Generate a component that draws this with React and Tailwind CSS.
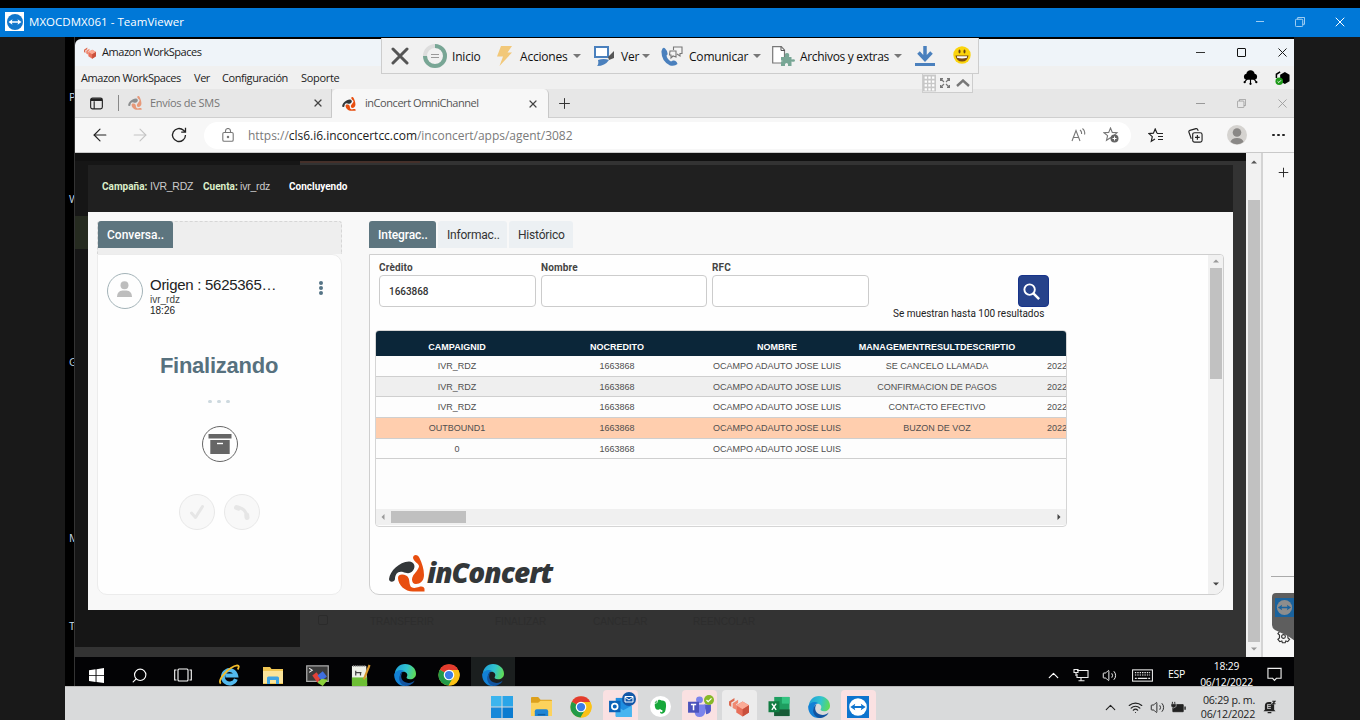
import React from "react";
import { X, Plus, ArrowLeft, ArrowRight, Search, ChevronUp, Volume2, Wifi } from "lucide-react";

const UI = "font-['Open_Sans','Noto_Sans',sans-serif]";
const ARIAL = "font-['Liberation_Sans',Arial,sans-serif]";
const ROBOTO = "font-['Roboto',Arial,sans-serif]";

function InConcertMark({ className }) {
  return (
    <svg viewBox="0 0 36 37" className={className}>
      <path fill="#333739" d="M0 24C1 16 10 7 20 6.5C25.5 6.5 27 12 24 15.5C21 19.5 17 18 14 17C9 15.5 6 19 6 24C5.5 27.5 0 27.5 0 24Z" />
      <path fill="#e84e0f" d="M24 3C24-1 29-1 30.5 3C33 8 35 14 35 20C35 26 31 29 27 29C23 29 22 24 24 21C25 19 30 14 30 11C29.5 8 25 7 24 3Z" />
      <path fill="#e84e0f" d="M9 23C9 19 14 19 17 20.5C21 22.5 20 27 21 30C22 34 27 33 30 32C33 31 35.500 32 35.500 34V36.500H24C16 36.500 9 30 9 23Z" />
    </svg>
  );
}

function WorkspacesMark({ className }) {
  return (
    <svg viewBox="0 0 24 22" className={className}>
      <path d="M1 5l6-4v3L3.500 6v5L1 9z" fill="#dd6a50" />
      <path d="M5 7l6-4v3.500L9 8v6L5 12z" fill="#f08a72" />
      <path d="M16 5l7 4v8l-7 4.500L9 17V9z" fill="#e8705a" />
      <path d="M16 5l7 4-7 4.500L9 9z" fill="#fbab96" />
      <path d="M16 13.500l7-4.500v8l-7 4.500z" fill="#c9503c" />
    </svg>
  );
}

function TeamViewerMark({ className, bg = "#0e74ce", fg = "#fff" }) {
  return (
    <svg viewBox="0 0 20 20" className={className}>
      <rect width="20" height="20" fill={bg} />
      <circle cx="10" cy="10" r="8" fill={fg} />
      <path d="M3 10l4.500-3-.6 2.200h6.200L12.500 7 17 10l-4.500 3 .6-2.200H6.900l.6 2.200z" fill={bg} />
    </svg>
  );
}

function EdgeMark({ className, id }) {
  return (
    <svg viewBox="0 0 24 24" className={className}>
      <defs>
        <linearGradient id={id} x1="0" y1="0.3" x2="1" y2="0.5">
          <stop offset="0" stopColor="#1f9fd8" />
          <stop offset="0.55" stopColor="#31c4cf" />
          <stop offset="1" stopColor="#5fdc55" />
        </linearGradient>
      </defs>
      <path d="M1 13C0 5 6 0 12 0c7 0 12 5 12 10.500 0 4-3 6-6.500 6-3 0-4.500-1-3.500-2.500 1.500-2.500 0-5.500-4-5.500C5 8.500 1.500 10 1 13z" fill={`url(#${id})`} />
      <path d="M.2 11.500C1.500 7 7 5.500 11 7.500c-3.500 1-5 4-4.500 8 .6 4 3.500 7 7 8.200C6 25 0 19 .2 11.500z" fill="#1281d6" />
      <path d="M9.500 9c-3 3.500-2 9 3 11 4 1.500 7.500.5 10-2-1.500 4-6 6-10 6-5-1-8-6-6.500-10.500C6.700 11 8 9.700 9.500 9z" fill="#1254a0" />
    </svg>
  );
}

function ChromeMark({ className }) {
  return (
    <svg viewBox="0 0 24 24" className={className}>
      <circle cx="12" cy="12" r="11.500" fill="#fbc116" />
      <path d="M12 12L2 6.200A11.500 11.500 0 0 1 22 6.200z" fill="#e33b2e" />
      <path d="M2 6.200A11.500 11.500 0 0 0 11.500 23.500L17 14.500 12 12z" fill="#229a48" />
      <path d="M12 6.500h10.200A11.500 11.500 0 0 1 11.500 23.500L17 14.500z" fill="#fbc116" />
      <circle cx="12" cy="12" r="5.800" fill="#fff" />
      <circle cx="12" cy="12" r="4.500" fill="#3c7de6" />
    </svg>
  );
}

function FolderMark({ className }) {
  return (
    <svg viewBox="0 0 24 22" className={className}>
      <path d="M1 2q0-1 1-1h6.500l2.500 3h11q1 0 1 1v16H1z" fill="#dda01c" />
      <path d="M1 7h7.500L11 5h12v16H1z" fill="#fcd25c" />
      <path d="M5 21v-5q0-2 2-2h10q2 0 2 2v5z" fill="#1f85d4" />
      <path d="M8 19.500h8" stroke="#0f60a5" strokeWidth="1.500" />
    </svg>
  );
}

function Caret() {
  return (
    <svg viewBox="0 0 8 4" className="h-[4px] w-[8px]">
      <path d="M0 0h8L4 4z" fill="#777" />
    </svg>
  );
}

function RestoreIcon({ className }) {
  return (
    <svg viewBox="0 0 11 11" className={className} fill="none" stroke="currentColor">
      <rect x=".5" y="2.500" width="8" height="8" rx="1" />
      <path d="M3 2.500V.5h7.500V8H8.500" />
    </svg>
  );
}

function TitleBar() {
  return (
    <header className={`flex h-[29px] shrink-0 items-center bg-[#0078d7] pb-[2px] text-white ${UI}`}>
      <div className="ml-[5px] flex h-[19px] w-[19px] items-center justify-center bg-white">
        <svg viewBox="0 0 18 18" className="h-[18px] w-[18px]">
          <circle cx="9" cy="9" r="8" fill="#1177cc" />
          <path d="M2.500 9l4-2.700-.6 2h6.200l-.6-2 4 2.700-4 2.700.6-2H5.900l.6 2z" fill="#fff" />
        </svg>
      </div>
      <span className="ml-[5px] flex-1 whitespace-nowrap text-[11.5px] tracking-[0.04px]">MXOCDMX061 - TeamViewer</span>
      <div className="flex w-[120px] items-center">
        <span className="flex w-[40px] justify-center"><span className="h-px w-[8px] bg-[#9cccf2]" /></span>
        <span className="flex w-[40px] justify-center"><RestoreIcon className="h-[10px] w-[10px] text-[#b5daf6]" /></span>
        <span className="flex w-[40px] justify-center"><X className="h-[16px] w-[16px]" strokeWidth={1.5} /></span>
      </div>
    </header>
  );
}

function WorkspacesBar() {
  return (
    <div className={`flex h-[27px] shrink-0 items-center rounded-tl-[6px] bg-[#eff4f9] text-[#1a1a1a] ${UI}`}>
      <WorkspacesMark className="ml-[8px] h-[12px] w-[14px]" />
      <span className="ml-[5px] flex-1 whitespace-nowrap text-[11px] tracking-[-0.45px]">Amazon WorkSpaces</span>
      <div className="-mr-[9px] flex">
        <span className="flex w-[41px] items-center justify-center"><span className="h-[1.5px] w-[9px] bg-[#333]" /></span>
        <span className="flex w-[41px] items-center justify-center"><span className="h-[9px] w-[9px] rounded-[1px] border-[1.5px] border-[#111]" /></span>
        <span className="flex w-[41px] items-center justify-center"><X className="h-[15px] w-[15px]" strokeWidth={1.6} /></span>
      </div>
    </div>
  );
}

function WorkspacesMenu() {
  return (
    <div className={`flex h-[23px] shrink-0 items-center bg-[#f0f0f0] pt-[2px] text-[11px] tracking-[-0.43px] text-[#222] ${UI}`}>
      <span className="ml-[6px] w-[113px] whitespace-nowrap">Amazon WorkSpaces</span>
      <span className="w-[28px]">Ver</span>
      <span className="w-[79px] whitespace-nowrap">Configuración</span>
      <span className="flex-1 tracking-[-0.3px]">Soporte</span>
      <svg viewBox="0 0 16 16" className="mb-[2px] h-[15px] w-[15px]">
        <rect x="1" y="4" width="14" height="6.500" rx="3.200" />
        <circle cx="8" cy="4.800" r="4.500" />
        <path d="M8 9v5M5 9l-3 3.500M11 9l3 3.500" stroke="#000" strokeWidth="1.200" />
        <circle cx="8" cy="14.700" r="1.200" /><circle cx="1.800" cy="13" r="1.200" /><circle cx="14.200" cy="13" r="1.200" />
      </svg>
      <svg viewBox="0 0 16 16" className="mb-[2px] ml-[17px] mr-[4px] h-[16px] w-[15px]">
        <path d="M1.500 8V4L5.500 1.500" stroke="#000" strokeWidth="1.600" fill="none" />
        <path d="M10.500 1.500l5 3v7l-5 3-5-3v-7z" />
        <circle cx="4.500" cy="11.500" r="4" fill="#1f9a1a" />
        <path d="M2.700 11.500l1.400 1.300 2.300-2.400" stroke="#fff" fill="none" />
      </svg>
    </div>
  );
}

function BrowserTabs() {
  return (
    <div className={`flex h-[29px] shrink-0 items-stretch border-b border-[#cfcfcf] bg-[#e7e7e7] text-[11px] ${UI}`}>
      <div className="flex w-[43px] items-center justify-center">
        <svg viewBox="0 0 14 13" className="h-[13px] w-[13px]" fill="none" stroke="#222" strokeWidth="1.200">
          <rect x=".7" y=".7" width="12.600" height="11.600" rx="2" />
          <path d="M1 2.500h12" strokeWidth="2.600" />
          <path d="M4.500 4v8.500" />
        </svg>
      </div>
      <div className="my-[6px] w-px bg-[#888]" />
      <div className="flex w-[213px] items-center border-r border-[#c8c8c8] pl-[9px]">
        <InConcertMark className="h-[14px] w-[14px] opacity-50" />
        <span className="ml-[8px] flex-1 tracking-[-0.3px] text-[#767676]">Envíos de SMS</span>
        <X className="mr-[7px] h-[12px] w-[12px] text-[#444]" strokeWidth={2.400} />
      </div>
      <div className="-mb-px flex w-[217px] items-center rounded-t-[5px] border-r border-[#c8c8c8] bg-[#f7f7f7] pl-[10px]">
        <InConcertMark className="h-[14px] w-[14px]" />
        <span className="ml-[9px] flex-1 whitespace-nowrap tracking-[-0.45px] text-[#555]">inConcert OmniChannel</span>
        <X className="mr-[9px] h-[12px] w-[12px] text-[#444]" strokeWidth={2.400} />
      </div>
      <div className="flex flex-1 items-center pl-[7px]">
        <Plus className="h-[17px] w-[17px] text-[#333]" strokeWidth={1.4} />
      </div>
      <div className="-mr-[9px] flex text-[#9a9a9a]">
        <span className="flex w-[41px] items-center justify-center"><span className="h-px w-[9px] bg-[#999]" /></span>
        <span className="flex w-[41px] items-center justify-center"><RestoreIcon className="h-[9px] w-[9px]" /></span>
        <span className="flex w-[41px] items-center justify-center"><X className="h-[15px] w-[15px]" strokeWidth={1.4} /></span>
      </div>
    </div>
  );
}

function AddressBar() {
  return (
    <div className={`flex h-[35px] shrink-0 items-center border-b border-[#c9c9c9] bg-[#f7f7f7] text-[#222] ${UI}`}>
      <ArrowLeft className="ml-[15px] h-[20px] w-[20px]" strokeWidth={1.4} />
      <ArrowRight className="ml-[20px] h-[20px] w-[20px] text-[#c4c4c4]" strokeWidth={1.3} />
      <svg viewBox="0 0 16 16" className="ml-[21px] h-[16px] w-[16px]" fill="none" stroke="currentColor" strokeWidth="1.300">
        <path d="M14.500 8A6.500 6.500 0 1 1 12.500 3.300L14.300 5M14.500.8V5.200H10.200" />
      </svg>
      <div className="ml-[17px] flex h-[27px] w-[927px] items-center rounded-full bg-white">
        <svg viewBox="0 0 12 14" className="ml-[18px] h-[14px] w-[12px]" fill="none" stroke="#777" strokeWidth="1.100">
          <rect x=".8" y="4.500" width="10.400" height="8.700" rx="1.300" />
          <path d="M3.500 4.500V3a2.500 2.500 0 0 1 5 0v1.500" />
          <circle cx="6" cy="9" r=".7" fill="#555" />
        </svg>
        <span className="ml-[14px] flex-1 whitespace-nowrap pt-[1px] text-[12px] tracking-[-0.02px] text-[#7a7a7a]">
          https://<span className="text-[#1b1b1b]">cls6.i6.inconcertcc.com</span>/inconcert/apps/agent/3082
        </span>
        <svg viewBox="0 0 15 14" className="h-[14px] w-[15px]" fill="none" stroke="#777" strokeWidth="1.100">
          <path d="M1 13L5 2.500 9 13M2.500 9.500h5M9 2q2 1.500 1.500 4M11.500.5q3 2.500 2 6" />
        </svg>
        <svg viewBox="0 0 16 16" className="ml-[17px] mr-[12px] h-[16px] w-[16px]">
          <path d="M7.500 1l1.800 4.400 4.700.4-3.600 3.100.8 4.200-3.700-2.400-4 2.500 1.100-4.600L1 5.800l4.700-.4z" fill="none" stroke="#777" strokeWidth="1.100" />
          <circle cx="11.500" cy="11.500" r="4" fill="#666" />
          <path d="M11.500 9.500v4M9.500 11.500h4" stroke="#fff" />
        </svg>
      </div>
      <svg viewBox="0 0 16 15" className="ml-[17px] h-[15px] w-[16px]" fill="none" stroke="currentColor" strokeWidth="1.200">
        <path d="M9 5.300L7.200 1 5.400 5.200 1 5.600l3.300 3-1 4.600L7 11M9 5.500h6M10 8.500h5M10 11.500h5" />
      </svg>
      <svg viewBox="0 0 16 16" className="ml-[24px] h-[15px] w-[15px]" fill="none" stroke="currentColor" strokeWidth="1.200">
        <rect x="5" y="5" width="10" height="10" rx="2" />
        <path d="M10 7.500v5M7.500 10h5M3.500 11.500L1 4.500q-.5-1.500 1-2L8.500.7q1.500-.3 2 1.300l.3 1" />
      </svg>
      <svg viewBox="0 0 20 20" className="ml-[24px] h-[20px] w-[20px]">
        <circle cx="10" cy="10" r="10" fill="#d5d3d0" />
        <circle cx="10" cy="7.500" r="4.300" fill="#8a8886" />
        <path d="M3.500 17q1-4 6.500-4t6.500 4Q10 21.500 3.500 17z" fill="#8a8886" />
      </svg>
      <div className="ml-[25px] flex gap-[2.500px]">
        <i className="h-[2.500px] w-[2.500px] rounded-full bg-[#222]" />
        <i className="h-[2.500px] w-[2.500px] rounded-full bg-[#222]" />
        <i className="h-[2.500px] w-[2.500px] rounded-full bg-[#222]" />
      </div>
    </div>
  );
}

function ConversationPanel() {
  return (
    <section className="flex h-[375px] w-[245px] flex-col">
      <div className="h-[33px] rounded-t-[3px] border border-b-0 border-dashed border-[#d6d6d6] bg-[#eee]">
        <div className={`-mt-px flex h-[27px] w-[75px] items-center rounded-t-[3px] bg-[#5d757f] pl-[9px] text-[12px] font-medium text-white ${ROBOTO}`}>Conversa..</div>
      </div>
      <div className="flex h-[341px] flex-col items-center rounded-[10px] rounded-tl-none border border-[#ececec] bg-[#fefefe]">
        <div className={`flex w-full ${ARIAL}`}>
          <div className="ml-[9px] mt-[18px] flex h-[36px] w-[36px] items-center justify-center rounded-full border-[1.5px] border-[#a3b3b8]">
            <svg viewBox="0 0 18 18" className="mb-[4px] mr-[2px] h-[17px] w-[17px]" fill="#bdbdbd">
              <circle cx="9" cy="4.500" r="4.200" />
              <path d="M1 17q0-6.500 6-7h4q6 .5 6 7z" />
            </svg>
          </div>
          <div className="ml-[7px] mt-[20px] flex w-[163px] flex-col text-[#222]">
            <span className="whitespace-nowrap text-[15px] leading-[20px] tracking-[-0.28px]">Origen : 5625365…</span>
            <span className="text-[10px] leading-[10px] text-[#444]">ivr_rdz</span>
            <span className="text-[10px] leading-[11px]">18:26</span>
          </div>
          <div className="ml-[6px] mt-[26px] flex flex-col gap-[1px]">
            <i className="h-[4px] w-[4px] rounded-full bg-[#557486]" />
            <i className="h-[4px] w-[4px] rounded-full bg-[#557486]" />
            <i className="h-[4px] w-[4px] rounded-full bg-[#557486]" />
          </div>
        </div>
        <h2 className={`-ml-[1px] mt-[35px] h-[30px] text-[22px] font-bold leading-[30px] tracking-[-0.25px] text-[#57717e] ${ARIAL}`}>Finalizando</h2>
        <div className="-ml-[2px] mt-[19px] flex gap-[5px]">
          <i className="h-[3px] w-[4px] rounded-full bg-[#cdd9df]" />
          <i className="h-[3px] w-[4px] rounded-full bg-[#cdd9df]" />
          <i className="h-[3px] w-[4px] rounded-full bg-[#cdd9df]" />
        </div>
        <div className="mt-[23px] flex h-[36px] w-[36px] items-center justify-center rounded-full border border-[#666]">
          <svg viewBox="0 0 24 20" className="h-[20px] w-[24px] shrink-0" fill="#666">
            <path d="M.5 0h23v4.500H.5zM2.300 6h19.400v14H2.300z" />
            <path d="M9 9.500h6" stroke="#fff" strokeWidth="1.400" />
          </svg>
        </div>
        <div className="-ml-[1px] mt-[32px] flex gap-[9px]">
          <div className="flex h-[36px] w-[36px] items-center justify-center rounded-full border border-[#e8e8e8] bg-[#f8f8f8]">
            <svg viewBox="0 0 16 16" className="h-[16px] w-[16px]" fill="none" stroke="#e6e6e6" strokeWidth="3" strokeLinecap="round" strokeLinejoin="round"><path d="M2.500 9l4 4.500L13.500 2.500" /></svg>
          </div>
          <div className="flex h-[36px] w-[36px] items-center justify-center rounded-full border border-[#e8e8e8] bg-[#f8f8f8]">
            <svg viewBox="0 0 16 16" className="h-[16px] w-[16px]" fill="none" stroke="#e6e6e6" strokeLinecap="round"><path d="M3 3.500Q11.500 3.500 13 13" strokeWidth="3" /><path d="M2.500 3.500l2 .7M12.700 11l.3 2.500" strokeWidth="5" /></svg>
          </div>
        </div>
      </div>
    </section>
  );
}

const ROWS = [
  ["IVR_RDZ", "1663868", "OCAMPO ADAUTO JOSE LUIS", "SE CANCELO LLAMADA", "2022"],
  ["IVR_RDZ", "1663868", "OCAMPO ADAUTO JOSE LUIS", "CONFIRMACION DE PAGOS", "2022"],
  ["IVR_RDZ", "1663868", "OCAMPO ADAUTO JOSE LUIS", "CONTACTO EFECTIVO", "2022"],
  ["OUTBOUND1", "1663868", "OCAMPO ADAUTO JOSE LUIS", "BUZON DE VOZ", "2022"],
  ["0", "1663868", "OCAMPO ADAUTO JOSE LUIS", "", ""],
];
const ROW_BG = ["bg-[#fdfdfd]", "bg-[#efefef]", "bg-[#fdfdfd]", "bg-[#ffceae]", "bg-[#fdfdfd]"];
const COLS = "grid grid-cols-[160px_160px_160px_160px_1fr]";

function ResultsTable() {
  return (
    <div className={`flex h-[197px] w-[692px] flex-col overflow-hidden rounded-[4px] border border-[#d5d5d5] bg-[#fdfdfd] ${ARIAL}`}>
      <div className={`-mx-px -mt-px h-[26px] shrink-0 bg-[#0b2639] pl-[2px] pt-[10px] text-center text-[9px] font-bold leading-[14px] text-white ${COLS}`}>
        <span>CAMPAIGNID</span>
        <span>NOCREDITO</span>
        <span>NOMBRE</span>
        <span className="tracking-[0.02px]">MANAGEMENTRESULTDESCRIPTIO</span>
      </div>
      {ROWS.map((r, i) => (
        <div key={i} className={`h-[20.7px] shrink-0 border-b border-[#cfcfcf] pl-[1px] text-center text-[9px] leading-[20px] text-[#4f4f4f] ${COLS} ${ROW_BG[i]}`}>
          <span>{r[0]}</span><span>{r[1]}</span><span>{r[2]}</span><span>{r[3]}</span>
          <span className="pl-[30px] text-left">{r[4]}</span>
        </div>
      ))}
      <div className="flex-1" />
      <div className="mb-[1px] flex h-[16px] items-center bg-[#f0f0f0]">
        <svg viewBox="0 0 4 8" className="ml-[5px] h-[6px] w-[4px]"><path d="M4 0v8L0 4z" fill="#999" /></svg>
        <div className="ml-[6px] h-[12px] w-[75px] bg-[#c0c0c0]" />
        <div className="flex-1" />
        <svg viewBox="0 0 4 8" className="mr-[5px] h-[6px] w-[4px]"><path d="M0 0v8l4-4z" fill="#444" /></svg>
      </div>
    </div>
  );
}

function Field({ label, width, value }) {
  return (
    <label className={`mr-[5px] flex flex-col text-[10px] text-[#333] ${ROBOTO} ${width}`}>
      <span className="h-[15px] font-bold leading-[15px] tracking-[0.15px] text-[#444]">{label}</span>
      <span className="flex h-[32px] items-center rounded-[4px] border border-[#ccc] bg-white pl-[9px] font-medium tracking-[-0.05px]">{value}</span>
    </label>
  );
}

function IntegrationPanel() {
  const tab = `flex h-[27px] items-center rounded-t-[3px] pl-[9px] text-[12px]`;
  return (
    <section className="ml-[27px] flex h-[375px] w-[855px] flex-col">
      <div className={`flex h-[33px] gap-[2px] ${ROBOTO}`}>
        <div className={`${tab} w-[67px] bg-[#5d757f] font-medium tracking-[-0.1px] text-white`}>Integrac..</div>
        <div className={`${tab} w-[69px] bg-[#ecf0f3] tracking-[-0.2px] text-[#333]`}>Informac..</div>
        <div className={`${tab} w-[64px] bg-[#ecf0f3] tracking-[-0.2px] text-[#333]`}>Histórico</div>
      </div>
      <div className="flex h-[341px] overflow-hidden rounded-b-[10px] rounded-tr-[4px] border border-[#cfcfcf] bg-[#fefefe]">
        <div className="flex flex-1 flex-col">
          <div className="flex h-[52px] pl-[9px] pt-[5px]">
            <Field label="Crèdito" width="w-[157px]" value="1663868" />
            <Field label="Nombre" width="w-[166px]" value="" />
            <Field label="RFC" width="w-[157px]" value="" />
            <div className="ml-[144px] mt-[15px] flex h-[32px] w-[31px] items-center justify-center rounded-[4px] border border-[#17338a] bg-[#26428b]">
              <svg viewBox="0 0 20 20" className="mr-[5px] h-[19px] w-[19px]" fill="none" stroke="#fff" strokeWidth="2"><circle cx="8" cy="8" r="5.500" /><path d="M12 12l6 6" strokeWidth="2.600" /></svg>
            </div>
          </div>
          <div className={`h-[23px] pl-[523px] text-[10px] leading-[14px] tracking-[-0.02px] text-[#222] ${ROBOTO}`}>Se muestran hasta 100 resultados</div>
          <div className="pl-[5px]"><ResultsTable /></div>
          <div className="flex pl-[19px] pt-[28px]">
            <InConcertMark className="h-[37px] w-[36px]" />
            <span className="ml-[2px] h-[37px] whitespace-nowrap font-['Open_Sans',sans-serif] text-[28px] font-extrabold italic leading-[34px] tracking-[-0.95px] text-[#333739]">inConcert</span>
          </div>
        </div>
        <div className="flex w-[15px] flex-col items-center bg-[#f1f1f1]">
          <svg viewBox="0 0 8 4" className="mt-[4px] h-[4px] w-[6px]"><path d="M0 4h8L4 0z" fill="#999" /></svg>
          <div className="mt-[5px] h-[111px] w-[12px] bg-[#c1c1c1]" />
          <div className="flex-1" />
          <svg viewBox="0 0 8 4" className="mb-[8px] h-[4px] w-[6px]"><path d="M0 0h8L4 4z" fill="#444" /></svg>
        </div>
      </div>
    </section>
  );
}

function Modal() {
  return (
    <div className="flex w-[1145px] flex-col bg-[#f8f8f8]">
      <div className={`flex h-[47px] shrink-0 items-center bg-[#202020] pl-[14px] pb-[5px] text-[10px] ${ROBOTO}`}>
        <span className="w-[48px] font-bold text-[#dcefc9]">Campaña:</span>
        <span className="w-[53px] pt-[1px] text-[10.5px] tracking-[-0.25px] text-[#ccc] font-['Liberation_Sans',sans-serif]">IVR_RDZ</span>
        <span className="w-[36px] font-bold text-[#dcefc9]">Cuenta:</span>
        <span className="w-[50px] pl-[1px] pt-[1px] text-[10.5px] tracking-[-0.2px] text-[#ccc] font-['Liberation_Sans',sans-serif]">ivr_rdz</span>
        <span className="font-bold text-white">Concluyendo</span>
      </div>
      <div className="flex flex-1 pl-[9px] pt-[9px]">
        <ConversationPanel />
        <IntegrationPanel />
      </div>
    </div>
  );
}

function PageArea() {
  return (
    <div className="flex w-[1171px] flex-col bg-[#333]">
      <div className="flex h-[12px] shrink-0 flex-col">
        <div className="h-[8px] bg-[#111]" />
        <div className="flex h-[4px]">
          <div className="w-[225px] bg-[#161616]" />
          <div className="h-[2px] w-[120px] bg-[#45302a]" />
        </div>
      </div>
      <div className="flex h-[445px] shrink-0">
        <div className="w-[13px] bg-[#161616] pt-[51px]"><div className="h-[33px] bg-[#262b20]" /></div>
        <Modal />
      </div>
      <div className="flex flex-1">
        <div className="h-[37px] w-[225px] bg-[#161616]" />
        <div className={`flex pt-[4px] text-[10px] text-[#2d2d2d] ${ARIAL}`}>
          <span className="ml-[18px] mt-[1px] h-[10px] w-[10px] rounded-[2px] border border-[#2b2b2b]" />
          <span className="ml-[42px] w-[125px]">TRANSFERIR</span>
          <span className="w-[98px]">FINALIZAR</span>
          <span className="w-[100px]">CANCELAR</span>
          <span>REENCOLAR</span>
        </div>
      </div>
    </div>
  );
}

function BrowserContent() {
  return (
    <div className="flex h-[504px] shrink-0">
      <PageArea />
      <div className="flex w-[17px] flex-col items-center border-r-2 border-[#d4d4d4] bg-[#f1f1f1]">
        <svg viewBox="0 0 8 4" className="mt-[7px] h-[4px] w-[6px]"><path d="M0 4h8L4 0z" fill="#555" /></svg>
        <div className="mt-[36px] h-[442px] w-[12px] bg-[#c1c1c1]" />
        <svg viewBox="0 0 8 4" className="mt-[5px] h-[4px] w-[6px]"><path d="M0 0h8L4 4z" fill="#999" /></svg>
      </div>
      <div className="flex w-[31px] flex-col items-center overflow-hidden bg-[#f7f7f7]">
        <Plus className="ml-[9px] mt-[12px] h-[15px] w-[15px] shrink-0 text-[#222]" strokeWidth={1.500} />
        <div className="ml-auto mt-[396px] h-px w-[23px] shrink-0 bg-[#aaa]" />
        <div className="relative ml-auto mt-[16px] h-[60px] w-[22px] shrink-0">
          <svg viewBox="0 0 16 16" className="absolute left-[4px] top-[36px] h-[15px] w-[15px]" fill="none" stroke="#333" strokeWidth="1.200">
            <path d="M6.500 1h3l.5 2 2-.8 2 2.500L12.700 6.500v3L14.500 11l-2 2.500-2-.8-.7 2h-3l-.6-2-2.200.8-2-2.500 1.700-1.500v-3L2 5l2-2.500 2 .7z" /><circle cx="8" cy="8" r="2" />
          </svg>
          <svg viewBox="0 0 23 48" className="absolute left-0 top-0 h-[48px] w-[23px]">
            <path d="M4 0H23V48L16 43 3 37Q0 35 0 32V4Q0 0 4 0z" fill="#5e5e5e" />
          </svg>
          <TeamViewerMark className="absolute left-[3px] top-[5px] h-[19px] w-[19px]" bg="#1a639e" fg="#8d8d8d" />
        </div>
      </div>
    </div>
  );
}

function RemoteTaskbar() {
  const slot = "flex h-[36px] w-[44px] items-center justify-center";
  const narrow = "flex h-[36px] w-[43px] items-center justify-center";
  return (
    <div className={`flex h-[29px] shrink-0 items-start overflow-hidden bg-[#030305] text-white ${UI}`}>
      <div className={narrow}>
        <svg viewBox="0 0 16 16" className="h-[15px] w-[15px]" fill="#fff"><path d="M0 2.300l7-1v6.300H0zM8 1.200L16 0v7.600H8zM0 8.500h7v6.300l-7-1zM8 8.500h8V16l-8-1.100z" /></svg>
      </div>
      <div className={narrow}><Search className="h-[17px] w-[17px] -scale-x-100" strokeWidth={1.600} /></div>
      <div className={narrow}>
        <svg viewBox="0 0 18 14" className="h-[14px] w-[18px]" fill="none" stroke="#fff" strokeWidth="1.100"><rect x="4" y="1" width="10" height="12" rx="1" /><path d="M2.500 2H.7v10h1.800M15.500 2h1.800v10h-1.800" /></svg>
      </div>
      <div className={`${slot} ml-[3px]`}>
        <svg viewBox="0 0 24 24" className="h-[22px] w-[22px]" fill="none">
          <path d="M19.500 16.500A7.300 7.300 0 1 1 19.800 12.500H8" stroke="#52b9ee" strokeWidth="4.300" />
          <path d="M3 21.500C-1 17 12 3 21 1.500q3 0 .5 4.500" stroke="#f3bd2b" strokeWidth="2" />
        </svg>
      </div>
      <div className={slot}>
        <svg viewBox="0 0 20 18" className="h-[18px] w-[20px]"><path d="M0 1h7l1.500 2H20v15H0z" fill="#f0c653" /><path d="M0 5h20v12H0z" fill="#fbe49a" /><path d="M4 18v-6q0-1.500 1.500-1.500h9Q16 10.500 16 12v6h-3v-4H7v4z" fill="#3fa4e4" /></svg>
      </div>
      <div className={slot}>
        <svg viewBox="0 0 22 20" className="h-[21px] w-[23px]"><path d="M.7.7h20.600v15H.7z" fill="#3b3b3b" stroke="#aaa" strokeWidth="1.200" /><path d="M3 3l3 2-3 2" stroke="#eee" fill="none" /><path d="M6 10l4-3 4 5-3 5z" fill="#e24238" /><path d="M11 10l5-4 4 5-5 4z" fill="#3f6fe0" /><path d="M11 17l4-4 6 1-5 6z" fill="#8cd13b" /></svg>
      </div>
      <div className={slot}>
        <svg viewBox="0 0 22 24" className="mr-[2px] h-[23px] w-[21px]"><path d="M2 2h15l1 20H2z" fill="#eef0e8" /><path d="M2 14h16v9H2z" fill="#6dbf35" /><path d="M3 2h14" stroke="#888" strokeWidth="2" strokeDasharray="1 1" /><path d="M6 7v5M6 9h6M11 9v3" stroke="#444" strokeWidth="1.300" /><path d="M20.500 1l-6 15" stroke="#d9982c" strokeWidth="2.200" /></svg>
      </div>
      <div className={slot}><EdgeMark id="edge-a" className="h-[22px] w-[22px]" /></div>
      <div className={slot}><ChromeMark className="h-[22px] w-[22px]" /></div>
      <div className={`${slot} bg-[#1b1f1f]`}><EdgeMark id="edge-b" className="h-[22px] w-[22px]" /></div>
      <div className="flex-1" />
      <div className="flex h-[36px] items-center">
        <ChevronUp className="h-[17px] w-[17px]" strokeWidth={1.700} />
        <svg viewBox="0 0 16 14" className="ml-[11px] h-[14px] w-[16px]" fill="none" stroke="#eee" strokeWidth="1.100"><path d="M4 2.500h11v7H4V6M8 10v2.500M5.500 12.700h6" /><path d="M1 1.500h4v3H1zM3 5v3" /></svg>
        <Volume2 className="ml-[13px] h-[15px] w-[15px]" strokeWidth={1.500} />
        <svg viewBox="0 0 22 13" className="ml-[15px] h-[13px] w-[21px]" fill="none" stroke="#eee" strokeWidth="1.100"><rect x=".6" y=".6" width="20.800" height="11.800" /><path d="M3 3.500h16M3 6h16" strokeDasharray="1.500 1" /><path d="M3 9.500h2M6 9.500h10M17 9.500h2" /></svg>
        <span className="ml-[15px] w-[18px] text-[10.500px] tracking-[-0.3px]">ESP</span>
      </div>
      <div className="ml-[12px] w-[57px] whitespace-nowrap pt-[1px] text-center text-[10.300px] leading-[16px] tracking-[-0.2px]">
        <div>18:29</div>
        <div>06/12/2022</div>
      </div>
      <svg viewBox="0 0 16 15" className="ml-[12px] mr-[12px] mt-[10px] h-[15px] w-[15px]" fill="none" stroke="#eee" strokeWidth="1.200"><path d="M1 1h14v10.500h-5L8 13.700l-2-2.200H1z" /></svg>
    </div>
  );
}

function LocalTaskbar() {
  const slot = "flex w-[39.6px] justify-center";
  const box = "flex h-[34px] w-[35px] items-center justify-center rounded-[4px] pb-[1px]";
  return (
    <footer className={`flex h-[34px] shrink-0 items-start overflow-hidden border-t border-[#bbb] bg-[#d9dadb] pl-[417px] pt-[3px] text-[#222] ${UI}`}>
      <div className={slot}><div className={box}>
        <svg viewBox="0 0 22 22" className="h-[22px] w-[22px]"><path d="M0 0h10.500v10.500H0z" fill="#3cb5ee" /><path d="M11.500 0H22v10.500H11.500z" fill="#2ba5e8" /><path d="M0 11.500h10.500V22H0z" fill="#1788d9" /><path d="M11.500 11.500H22V22H11.500z" fill="#0b7bd0" /></svg>
      </div></div>
      <div className={slot}><div className={box}><FolderMark className="h-[21px] w-[23px]" /></div></div>
      <div className={slot}><div className={box}><ChromeMark className="h-[22px] w-[22px]" /></div></div>
      <div className={slot}><div className={`${box} relative bg-[#fae1e2]`}>
        <svg viewBox="0 0 24 22" className="h-[21px] w-[23px]"><path d="M7 2h16v19H7z" fill="#1f8ee0" /><path d="M7 10l8 5 9-5v12H7z" fill="#48b5f0" /><path d="M0 5h12v12H0z" fill="#0b63b8" /><circle cx="6" cy="11" r="3" fill="none" stroke="#fff" strokeWidth="1.800" /></svg>
        <svg viewBox="0 0 14 14" className="absolute right-[2px] top-[2px] h-[14px] w-[14px]"><circle cx="7" cy="7" r="7" fill="#1458a8" /><path d="M3 4.500h8v5.500H3zM3 5l4 3 4-3" fill="none" stroke="#fff" /></svg>
      </div></div>
      <div className={slot}><div className={box}>
        <svg viewBox="0 0 22 22" className="h-[21px] w-[21px]"><circle cx="11" cy="11" r="11" fill="#fff" /><path d="M9 4q-1 0-1.200 2.800Q7.500 8 5 8q-.5 6 3.500 6.500 1.500 0 2-1.200.5 1.500 2.500 1.500.5 2.200-1 2.200-1.200-.2-1.200-1-1 2.500 1.800 2.500 3 0 3.700-4Q17.500 9 16 6 14 4.500 12 4.800 11 3.700 9 4zM7 4.500L4.800 7H7z" fill="#17a83a" /></svg>
      </div></div>
      <div className={slot}><div className={`${box} relative bg-[#fae1e2]`}>
        <svg viewBox="0 0 24 22" className="h-[21px] w-[23px]"><circle cx="12" cy="4" r="3.600" fill="#7b83eb" /><circle cx="20" cy="6" r="2.500" fill="#5059c9" /><path d="M17 9h7v6q-1 4-5 4z" fill="#5059c9" /><path d="M7 9h11v8q-1 5-6 5t-5-5z" fill="#7b83eb" /><path d="M0 6h11.500v11.500H0z" fill="#4b53bc" /><path d="M3 9h5.500M5.750 9v6" stroke="#fff" strokeWidth="1.600" /></svg>
        <svg viewBox="0 0 12 12" className="absolute right-[3px] top-[5px] h-[10px] w-[10px]"><circle cx="6" cy="6" r="6" fill="#88b927" /><path d="M3 6l2 2 4-4" fill="none" stroke="#fff" strokeWidth="1.500" /></svg>
      </div></div>
      <div className={slot}><div className={`${box} bg-[#ececec]`}><WorkspacesMark className="h-[20px] w-[22px]" /></div></div>
      <div className={slot}><div className={box}>
        <svg viewBox="0 0 22 22" className="h-[21px] w-[22px]"><path d="M6 1h16v20H6z" fill="#1e9e60" /><path d="M14 1h8v7h-8z" fill="#33c481" /><path d="M6 14h16v7H6z" fill="#185c37" /><path d="M0 5.500h11.500V17H0z" fill="#107c41" /><path d="M3.500 8l4.500 6.500M8 8l-4.500 6.500" stroke="#fff" strokeWidth="1.500" /></svg>
      </div></div>
      <div className={slot}><div className={box}><EdgeMark id="edge-c" className="h-[22px] w-[22px]" /></div></div>
      <div className={slot}><div className={`${box} bg-[#fae1e2]`}><TeamViewerMark className="h-[22px] w-[22px]" /></div></div>
      <div className="flex-1" />
      <div className="flex h-[34px] items-center">
        <ChevronUp className="h-[17px] w-[17px]" strokeWidth={1.600} />
        <Wifi className="ml-[9px] h-[15px] w-[15px]" strokeWidth={1.800} />
        <Volume2 className="ml-[7px] h-[15px] w-[15px]" strokeWidth={1.500} />
        <svg viewBox="0 0 16 12" className="ml-[6px] h-[12px] w-[15px]"><path d="M2 3.500h11v7.500H2z" fill="#222" stroke="#222" /><path d="M15 5.500v3.500" stroke="#222" strokeWidth="1.500" /><path d="M0 2.500h5.500v3q-2.700 3-5.500 0z" fill="#222" stroke="#d9dadb" strokeWidth=".6" /><path d="M1.500.5v2M4 .5v2" stroke="#222" /></svg>
      </div>
      <div className="ml-[14px] w-[55px] whitespace-nowrap pt-[3px] text-right text-[10.700px] leading-[14px] tracking-[-0.25px]">
        <div>06:29 p. m.</div>
        <div>06/12/2022</div>
      </div>
      <svg viewBox="0 0 14 14" className="ml-[8px] mr-[18px] mt-[10px] h-[14px] w-[13px]"><path d="M2 10V6q0-4.500 4.500-4.500H9V4h3v6l1.500 1.500H.5z" fill="#222" /><path d="M5 13h4M10 .8h3L10.500 3.500h3" stroke="#222" strokeWidth="1.200" fill="none" /><path d="M5 4.500h3.500M5 6.500h3.500M5 8.500h3.500M5 4v5" stroke="#ddd" strokeWidth=".9" fill="none" /></svg>
    </footer>
  );
}

function RemoteToolbar() {
  return (
    <div className={`absolute left-[381px] top-[38px] flex h-[36px] w-[598px] items-center border border-t-0 border-[#cdcdcd] bg-[#f1f1f1] pt-[1px] text-[12px] tracking-[-0.2px] text-[#111] ${UI}`}>
      <svg viewBox="0 0 18 18" className="ml-[9px] h-[18px] w-[18px]" stroke="#555" strokeWidth="3" strokeLinecap="round"><path d="M2 2l14 14M16 2L2 16" /></svg>
      <svg viewBox="0 0 24 24" className="ml-[14px] h-[24px] w-[24px]" fill="none">
        <circle cx="12" cy="12" r="10" stroke="#ddd" strokeWidth="4" />
        <path d="M12 2a10 10 0 1 1-10 10" stroke="#78a695" strokeWidth="4" />
        <path d="M8 10.500h8M8 13.500h8" stroke="#999" />
      </svg>
      <span className="ml-[5px] w-[44px] pt-[1px]">Inicio</span>
      <svg viewBox="0 0 16 20" className="h-[20px] w-[16px]"><path d="M5 0h11l-4.500 6.500H16L3.500 20 7 10.500H1z" fill="#f2c879" /></svg>
      <span className="ml-[8px] w-[53px] pt-[1px]">Acciones</span><Caret />
      <svg viewBox="0 0 20 20" className="ml-[13px] h-[20px] w-[20px]"><path d="M1 1h13v10H1z" fill="#fff" stroke="#4a80bd" strokeWidth="2" /><path d="M4 14q6-2 11 0-4 6-12 6 2-2 1-6z" fill="#4a80bd" /><path d="M20 5v7l-5 2-1-3z" fill="#555" /></svg>
      <span className="ml-[7px] w-[21px] pt-[1px]">Ver</span><Caret />
      <svg viewBox="0 0 22 20" className="ml-[11px] h-[20px] w-[22px]"><path d="M4.500 3Q2-.500.5 5 0 15 9 19.500q5 1 7.500-1.500-1-4-4.500-3.500l-2 1Q6 13 5.500 9.500l1-1q.5-3-2-5.500z" fill="#4a80bd" /><path d="M9 5h6v6l-3-1-2 2V9H8.500zM12.500 4V1H21v6.500h-2V10l-3-2" fill="#f4f4f4" stroke="#777" strokeWidth="1.100" /></svg>
      <span className="ml-[6px] w-[64px] pt-[1px]">Comunicar</span><Caret />
      <svg viewBox="0 0 23 20" className="ml-[11px] h-[20px] w-[23px]"><path d="M.7.7h8.600L12.500 4v13H.7z" fill="#fff" stroke="#777" strokeWidth="1.200" /><path d="M9 .5V4.500H13" fill="none" stroke="#555" /><path d="M9 11h4q-1-4 2-4t2 4h2.500v2.500q3.500-1 3.500 1t-3.500 1V20H16v-2q-1.500-2-3 0v2H9v-4.500l2-.5-2-.500z" fill="#78a695" /></svg>
      <span className="ml-[5px] w-[94px] whitespace-nowrap pt-[1px] tracking-[-0.32px]">Archivos y extras</span><Caret />
      <svg viewBox="0 0 20 20" className="ml-[13px] h-[20px] w-[20px]" fill="none" stroke="#4a80bd"><path d="M10 0v13M3.500 6.500L10 13.500l6.500-7" strokeWidth="3.500" /><path d="M0 18.500h20" strokeWidth="3" /></svg>
      <svg viewBox="0 0 18 18" className="-mt-[2px] ml-[18px] h-[18px] w-[18px]"><circle cx="9" cy="9" r="8.700" fill="#fbd40c" /><path d="M2.500 9.500h13q-1 6-6.500 6t-6.500-6z" fill="#7a4a14" /><path d="M4 10.300h10v1.500q-5 1.500-10 0z" fill="#fff" /><ellipse cx="6.500" cy="5.500" rx="1" ry="2" fill="#6a4512" /><ellipse cx="11.500" cy="5.500" rx="1" ry="2" fill="#6a4512" /></svg>
    </div>
  );
}

function ToolbarGrip() {
  return (
    <div className="absolute left-[922px] top-[74px] flex h-[19px] w-[51px] items-center border border-t-0 border-[#cdcdcd] bg-[#f1f1f1]">
      <svg viewBox="0 0 14 18" className="h-[18px] w-[13px]">
        <rect width="14" height="18" fill="#c8c8c8" />
        <path d="M3 2v15M7 2v15M11 2v15" stroke="#fff" strokeWidth="2.500" strokeDasharray="2.500 1.700" />
      </svg>
      <svg viewBox="0 0 10 10" className="ml-[4px] h-[10px] w-[10px]" fill="none" stroke="#777" strokeWidth="1.200"><path d="M.6 3V.6H3M.6.6L4 4M7 .6h2.400V3M9.400.6L6 4M.6 7v2.400H3M.6 9.400L4 6M9.400 7v2.400H7M9.400 9.400L6 6" /></svg>
      <svg viewBox="0 0 14 8" className="ml-[6px] h-[8px] w-[14px]" fill="none" stroke="#777" strokeWidth="2.400"><path d="M1 7l6-5.500L13 7" /></svg>
    </div>
  );
}

export default function App() {
  return (
    <div className="relative flex h-[720px] w-[1360px] flex-col overflow-hidden bg-[#191919]">
      <div className="h-[8px] shrink-0 bg-black" />
      <TitleBar />
      <div className="flex h-[683px]">
        <div className="w-[65px]" />
        <div className="flex w-[1229px] flex-col">
          <div className="flex h-[649px] bg-black">
            <div className={`flex w-[10px] flex-col overflow-hidden border-r border-[#333] pl-[4px] text-[11px] leading-[14px] text-[#c5dbe8] ${UI}`}>
              <span className="mt-[53px]">P</span>
              <span className="mt-[88px]">W</span>
              <span className="mt-[149px]">G</span>
              <span className="mt-[162px]">M</span>
              <span className="mt-[74px]">T</span>
            </div>
            <div className="flex w-[1219px] flex-col pt-[2px]">
              <WorkspacesBar />
              <WorkspacesMenu />
              <BrowserTabs />
              <AddressBar />
              <BrowserContent />
              <RemoteTaskbar />
            </div>
          </div>
          <LocalTaskbar />
        </div>
      </div>
      <RemoteToolbar />
      <ToolbarGrip />
    </div>
  );
}
